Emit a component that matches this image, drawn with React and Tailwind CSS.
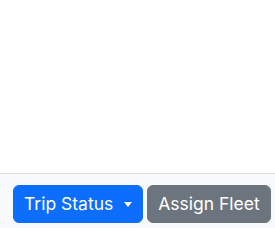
import React from "react"

export default function App() {
    return (
        <div className="w-[275px] h-[228px] overflow-hidden bg-white font-['Inter',sans-serif]">
            <div className="h-[173px]" />
            <div className="border-t border-[#dee2e6] bg-[#f8f9fa] h-[80px] pt-[11px] pl-[13px] flex gap-[4px] whitespace-nowrap">
                <button className="shrink-0 h-[38px] flex items-center rounded-[6px] border border-[#0d6efd] bg-[#0d6efd] pl-[10px] pr-[10px] text-[17.5px] text-white leading-6">
                    Trip Status
                    <span className="ml-[11px] inline-block w-0 h-0 border-x-[4.5px] border-x-transparent border-t-[5px] border-t-white" />
                </button>
                <button className="shrink-0 h-[38px] flex items-center rounded-[6px] border border-[#6c757d] bg-[#6c757d] px-[10px] text-[17.5px] text-white leading-6">
                    Assign Fleet
                </button>
                <button className="shrink-0 h-[38px] flex items-center rounded-[6px] border border-[#6c757d] bg-[#6c757d] px-[12px] text-[17.5px] text-white leading-6">
                    Close
                </button>
            </div>
        </div>
    )
}
